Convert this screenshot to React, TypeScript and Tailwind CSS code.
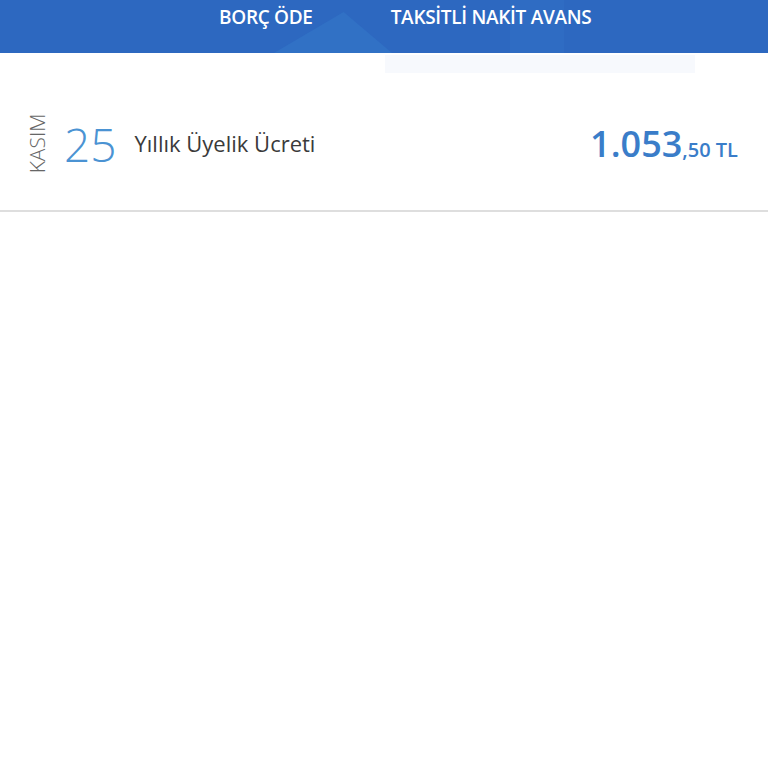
export default function App() {
  return (
    <div className="min-h-[768px] bg-white" style={{ fontFamily: '"Open Sans", "Noto Sans", sans-serif' }}>
      {/* top tab bar */}
      <div className="relative h-[53px] overflow-hidden bg-[#2d68c0]">
        <div className="absolute left-[274px] top-[12px] h-[41px] w-[118px] bg-[#3171c5]" style={{ clipPath: 'polygon(59% 0, 100% 100%, 0 100%)' }} />
        <div className="absolute left-[510px] top-0 h-[53px] w-[54px] bg-[#2f6cc3]" />
        <div className="relative flex h-[34px] items-center text-[19px] font-semibold tracking-[-0.3px] text-white">
          <span className="ml-[219px]">BORÇ ÖDE</span>
          <span className="ml-[78px]">TAKSİTLİ NAKİT AVANS</span>
        </div>
      </div>

      {/* faded strip under the header */}
      <div className="relative h-[20px]">
        <div className="absolute left-[385px] top-[2px] h-[18px] w-[310px] bg-[#f7f9fd]" />
      </div>

      {/* transaction row */}
      <div className="flex h-[139px] items-center border-b-2 border-[#dedede] pt-[4px]">
        <div className="ml-[28px] flex w-[20px] justify-center">
          <span className="-rotate-90 text-[21px] font-light leading-none text-[#666]">KASIM</span>
        </div>
        <span className="ml-[16px] text-[46px] font-light leading-none text-[#4b93d3]">25</span>
        <span className="ml-[18px] text-[22px] text-[#3a3a3a]">Yıllık Üyelik Ücreti</span>
        <div className="ml-auto mr-[30px] flex items-baseline text-[#3a7dc9]">
          <span className="text-[36px] font-semibold leading-none">1.053</span>
          <span className="text-[20px] font-semibold leading-none">,50 TL</span>
        </div>
      </div>
    </div>
  )
}
